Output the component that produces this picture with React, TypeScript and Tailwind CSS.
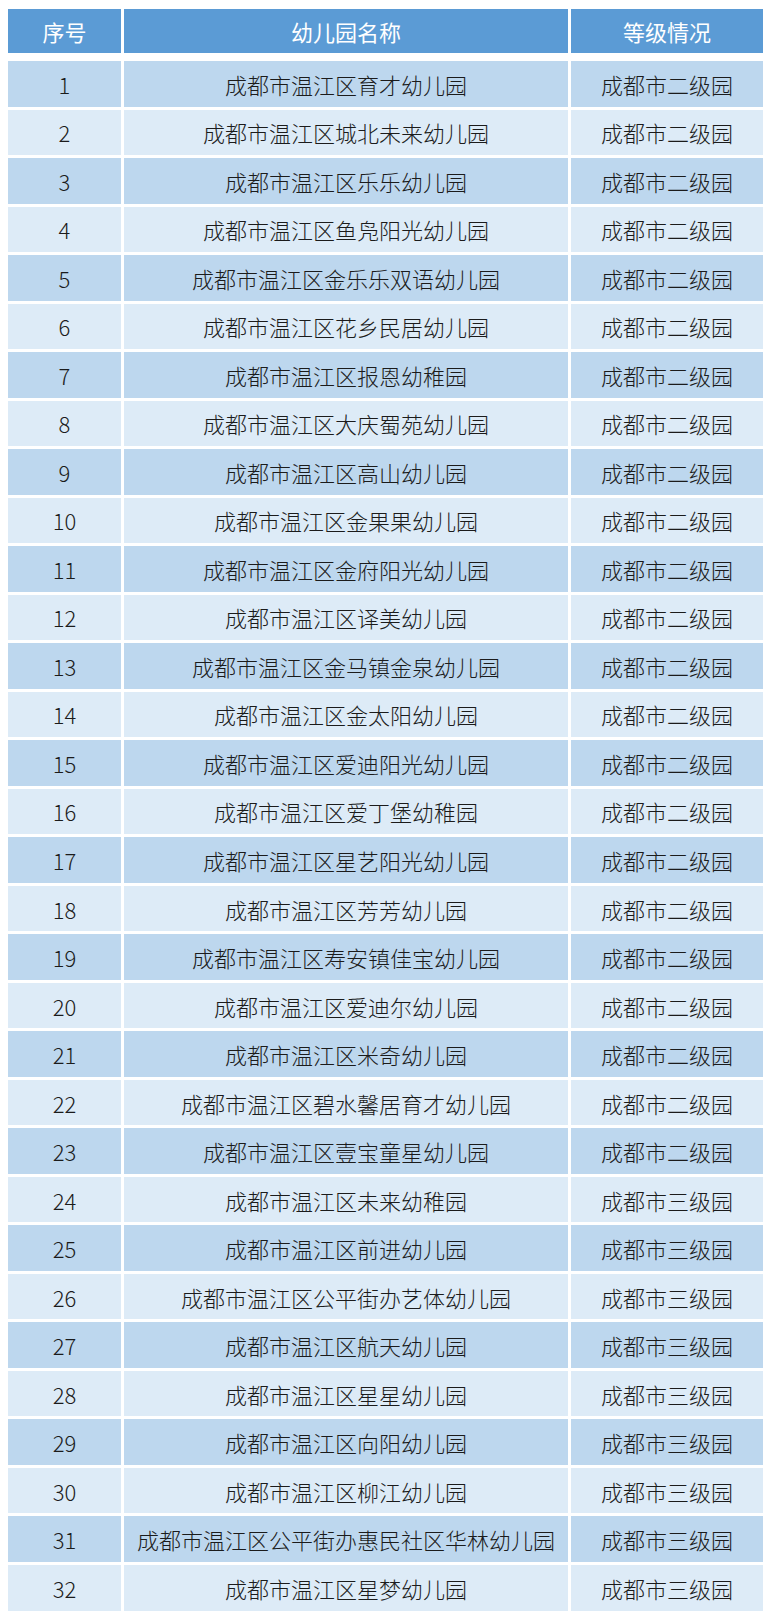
const names = [
  "成都市温江区育才幼儿园",
  "成都市温江区城北未来幼儿园",
  "成都市温江区乐乐幼儿园",
  "成都市温江区鱼凫阳光幼儿园",
  "成都市温江区金乐乐双语幼儿园",
  "成都市温江区花乡民居幼儿园",
  "成都市温江区报恩幼稚园",
  "成都市温江区大庆蜀苑幼儿园",
  "成都市温江区高山幼儿园",
  "成都市温江区金果果幼儿园",
  "成都市温江区金府阳光幼儿园",
  "成都市温江区译美幼儿园",
  "成都市温江区金马镇金泉幼儿园",
  "成都市温江区金太阳幼儿园",
  "成都市温江区爱迪阳光幼儿园",
  "成都市温江区爱丁堡幼稚园",
  "成都市温江区星艺阳光幼儿园",
  "成都市温江区芳芳幼儿园",
  "成都市温江区寿安镇佳宝幼儿园",
  "成都市温江区爱迪尔幼儿园",
  "成都市温江区米奇幼儿园",
  "成都市温江区碧水馨居育才幼儿园",
  "成都市温江区壹宝童星幼儿园",
  "成都市温江区未来幼稚园",
  "成都市温江区前进幼儿园",
  "成都市温江区公平街办艺体幼儿园",
  "成都市温江区航天幼儿园",
  "成都市温江区星星幼儿园",
  "成都市温江区向阳幼儿园",
  "成都市温江区柳江幼儿园",
  "成都市温江区公平街办惠民社区华林幼儿园",
  "成都市温江区星梦幼儿园",
];

const rows = names.map((name, i) => ({
  no: i + 1,
  name,
  level: i < 23 ? "成都市二级园" : "成都市三级园",
}));

export default function App() {
  return (
    <div
      className="w-[771px] h-[1611px] overflow-hidden bg-white pt-[9px] pl-[8px]"
      style={{ fontFamily: '"Noto Sans CJK SC", "Noto Sans", sans-serif' }}
    >
      {/* Header */}
      <div className="grid grid-cols-[113px_444px_192px] gap-x-[3px] text-white text-[22px] leading-none">
        <div className="h-[44px] bg-[#5b9bd5] flex items-center justify-center">序号</div>
        <div className="h-[44px] bg-[#5b9bd5] flex items-center justify-center">幼儿园名称</div>
        <div className="h-[44px] bg-[#5b9bd5] flex items-center justify-center">等级情况</div>
      </div>

      {/* Body */}
      <div className="mt-[8px] flex flex-col gap-y-[3px] text-[22px] leading-none font-light text-[#1b1b1b]">
        {rows.map((r) => {
          const bg = r.no % 2 === 1 ? "bg-[#bdd7ee]" : "bg-[#ddebf7]";
          return (
            <div key={r.no} className="grid grid-cols-[113px_444px_192px] gap-x-[3px]">
              <div className={`h-[45.53px] flex items-center justify-center ${bg}`}>{r.no}</div>
              <div className={`h-[45.53px] flex items-center justify-center ${bg}`}>{r.name}</div>
              <div className={`h-[45.53px] flex items-center justify-center ${bg}`}>{r.level}</div>
            </div>
          );
        })}
      </div>
    </div>
  );
}
